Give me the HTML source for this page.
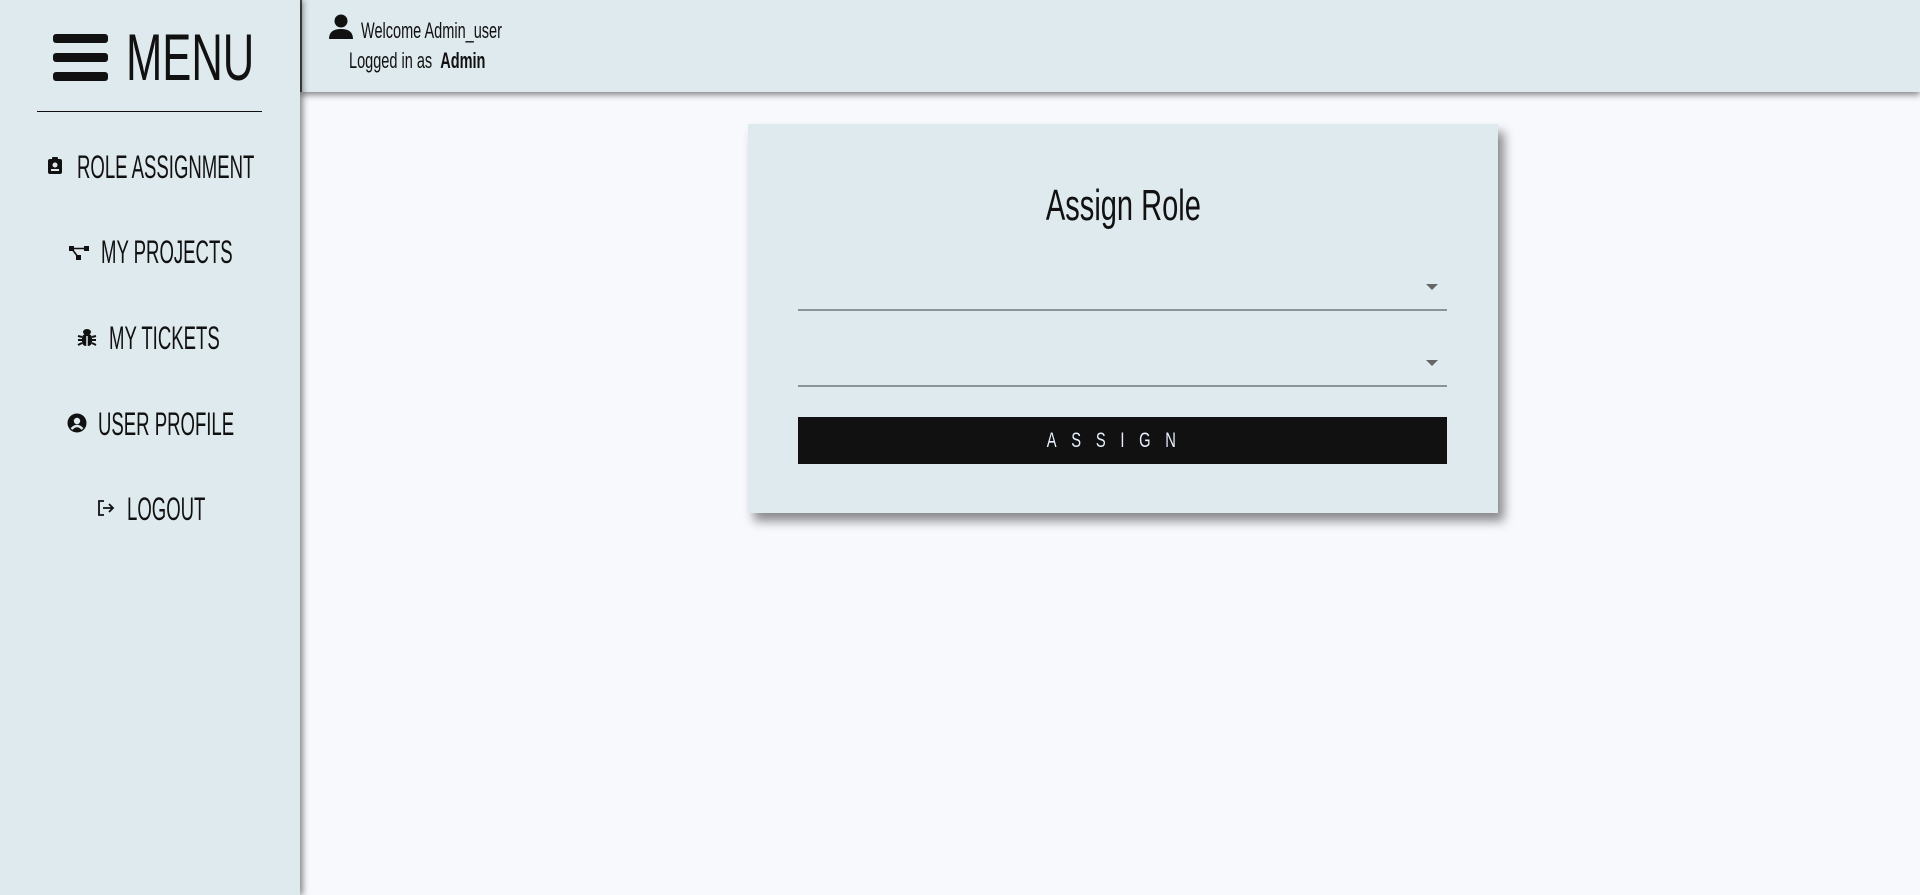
<!DOCTYPE html>
<html><head><meta charset="utf-8"><style>
*{margin:0;padding:0;box-sizing:border-box}
body{width:1920px;height:895px;overflow:hidden;background:#f7f9fd;font-family:"Liberation Sans",sans-serif;color:#111;position:relative}
.sq{display:inline-block;transform:scaleX(.62);transform-origin:center;white-space:nowrap}
.l{position:absolute;white-space:nowrap;transform-origin:left center}
#side{position:absolute;left:0;top:0;width:300px;height:895px;background:#dfeaee;box-shadow:3px 0 6px rgba(0,0,0,.45);z-index:3}
#hdr{position:absolute;left:300px;top:0;width:1620px;height:92px;background:#dfeaee;box-shadow:0 3px 6px rgba(0,0,0,.45);border-left:2px solid #555;z-index:2}
.ham{position:absolute;left:53px;top:34px;width:55px}
.ham i{display:block;height:9px;background:#111;border-radius:3px;margin-bottom:10px}
.menu{font-size:66px;line-height:66px;left:126px;top:24px;transform:scaleX(.66)}
.hr{position:absolute;left:37px;top:111px;width:225px;height:1px;background:#111}
.nt{font-size:32px;line-height:34px;transform:scaleX(.58);font-weight:normal}
.ic{position:absolute}
.card{position:absolute;left:748px;top:124px;width:750px;height:389px;background:#dfeaee;box-shadow:6px 8px 10px rgba(0,0,0,.45)}
.title{position:absolute;left:0;width:750px;text-align:center;font-size:44px;line-height:52px}
.sel{position:absolute;left:798px;width:649px;height:2px;background:#8a9499}
.arr{position:absolute;left:1426px;width:0;height:0;border-left:6px solid transparent;border-right:6px solid transparent;border-top:6px solid #666}
.btn{position:absolute;left:798px;top:417px;width:649px;height:47px;background:#111;color:#e8f0ff;text-align:center;font-size:21px;line-height:47px}
</style></head><body>
<div id="side">
 <div class="ham"><i></i><i></i><i></i></div>
 <div class="l menu">MENU</div>
 <div class="hr"></div>
 <svg class="ic" style="left:47px;top:157px" width="16" height="18" viewBox="0 0 16 18"><rect x="1" y="2" width="14" height="15" rx="2" fill="#111"/><rect x="5" y="0" width="6" height="4" rx="1" fill="#111"/><circle cx="8" cy="8" r="2.5" fill="#dfeaee"/><rect x="4" y="12" width="8" height="2" fill="#dfeaee"/></svg>
 <div class="l nt" style="left:77px;top:150px">ROLE ASSIGNMENT</div>
 <svg class="ic" style="left:68px;top:244px" width="22" height="18" viewBox="0 0 22 18"><rect x="1" y="2" width="5" height="5" fill="#111"/><rect x="16" y="2" width="5" height="5" fill="#111"/><rect x="8" y="11" width="5" height="5" fill="#111"/><path d="M4 5L10 13M6 4.5H16" stroke="#111" stroke-width="1.6"/></svg>
 <div class="l nt" style="left:101px;top:235px">MY PROJECTS</div>
 <svg class="ic" style="left:77px;top:328px" width="20" height="20" viewBox="0 0 20 20"><ellipse cx="10" cy="4" rx="4" ry="3" fill="#111"/><rect x="5" y="6" width="10" height="12" rx="4" fill="#111"/><path d="M1 8L5 9M19 8L15 9M1 12H5M19 12H15M1 17L5 15M19 17L15 15" stroke="#111" stroke-width="2"/><path d="M10 8V18" stroke="#dfeaee" stroke-width="1.5"/></svg>
 <div class="l nt" style="left:109px;top:321px">MY TICKETS</div>
 <svg class="ic" style="left:67px;top:413px" width="20" height="20" viewBox="0 0 20 20"><circle cx="10" cy="10" r="9.5" fill="#111"/><circle cx="10" cy="8" r="3.2" fill="#dfeaee"/><path d="M4.5 16Q10 10 15.5 16" stroke="#dfeaee" stroke-width="2.5" fill="none"/></svg>
 <div class="l nt" style="left:98px;top:407px">USER PROFILE</div>
 <svg class="ic" style="left:97px;top:499px" width="18" height="18" viewBox="0 0 18 18"><path d="M7 2H2V16H7" stroke="#111" stroke-width="1.8" fill="none"/><path d="M6 9H16M12 5L16 9L12 13" stroke="#111" stroke-width="1.8" fill="none"/></svg>
 <div class="l nt" style="left:127px;top:492px">LOGOUT</div>
</div>
<div id="hdr">
 <svg style="position:absolute;left:26px;top:14px" width="26" height="26" viewBox="0 0 26 26"><circle cx="13" cy="7" r="6.5" fill="#111"/><path d="M1 25Q1 15 13 15Q25 15 25 25Z" fill="#111"/></svg>
 <div class="l" style="left:59px;top:18px;font-size:22px;line-height:25px;transform:scaleX(.66)">Welcome Admin_user</div>
 <div class="l" style="left:47px;top:48px;font-size:22px;line-height:25px;transform:scaleX(.66)">Logged in as&nbsp; <b>Admin</b></div>
</div>
<div class="card"><div class="title" style="top:56px"><span class="sq" style="transform:scaleX(.66)">Assign Role</span></div></div>
<div class="sel" style="top:309px"></div><div class="arr" style="top:284px"></div>
<div class="sel" style="top:385px"></div><div class="arr" style="top:360px"></div>
<div class="btn"><span class="sq" style="transform:scaleX(.7);letter-spacing:21px;margin-right:-21px;position:relative;left:-14px">ASSIGN</span></div>
</body></html>
